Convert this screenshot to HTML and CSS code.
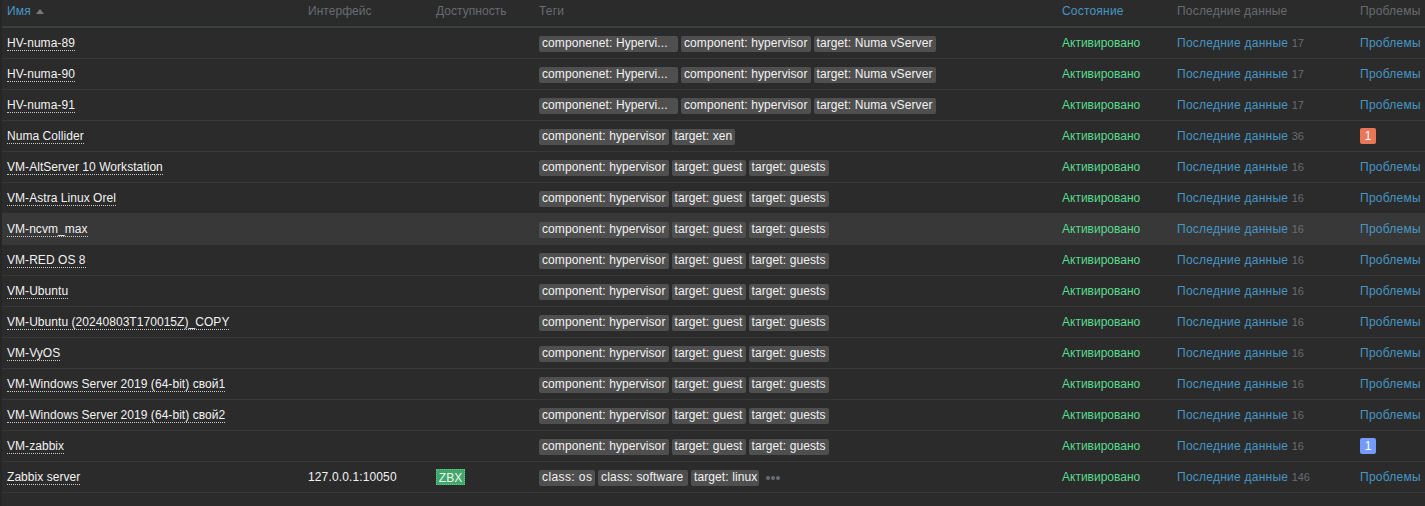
FILE: index.html
```html
<!DOCTYPE html>
<html lang="ru">
<head>
<meta charset="utf-8">
<title>Узлы сети</title>
<link rel="stylesheet" href="styles.css">
</head>
<body>
<main class="page">
<table class="hosts">
<colgroup><col class="c-name"><col class="c-iface"><col class="c-avail"><col class="c-tags"><col class="c-state"><col class="c-data"><col class="c-prob"></colgroup>
<thead><tr>
<th><a class="sort">Имя</a><span class="arrow"></span></th><th class="th-tight">Интерфейс</th><th class="th-tight">Доступность</th><th>Теги</th><th><a class="sort">Состояние</a></th><th>Последние данные</th><th>Проблемы</th>
</tr></thead>
<tbody>
<tr><td><a class="host">HV-numa-89</a></td><td></td><td></td><td><div class="tags"><span class="tag t-long">componenet: Hypervi...</span><span class="tag">component: hypervisor</span><span class="tag">target: Numa vServer</span></div></td><td class="on">Активировано</td><td><a class="link">Последние данные</a> <sup class="n">17</sup></td><td><a class="link">Проблемы</a></td></tr>
<tr><td><a class="host">HV-numa-90</a></td><td></td><td></td><td><div class="tags"><span class="tag t-long">componenet: Hypervi...</span><span class="tag">component: hypervisor</span><span class="tag">target: Numa vServer</span></div></td><td class="on">Активировано</td><td><a class="link">Последние данные</a> <sup class="n">17</sup></td><td><a class="link">Проблемы</a></td></tr>
<tr><td><a class="host">HV-numa-91</a></td><td></td><td></td><td><div class="tags"><span class="tag t-long">componenet: Hypervi...</span><span class="tag">component: hypervisor</span><span class="tag">target: Numa vServer</span></div></td><td class="on">Активировано</td><td><a class="link">Последние данные</a> <sup class="n">17</sup></td><td><a class="link">Проблемы</a></td></tr>
<tr><td><a class="host">Numa Collider</a></td><td></td><td></td><td><div class="tags"><span class="tag">component: hypervisor</span><span class="tag">target: xen</span></div></td><td class="on">Активировано</td><td><a class="link">Последние данные</a> <sup class="n">36</sup></td><td><span class="badge b-red">1</span></td></tr>
<tr><td><a class="host">VM-AltServer 10 Workstation</a></td><td></td><td></td><td><div class="tags"><span class="tag">component: hypervisor</span><span class="tag">target: guest</span><span class="tag">target: guests</span></div></td><td class="on">Активировано</td><td><a class="link">Последние данные</a> <sup class="n">16</sup></td><td><a class="link">Проблемы</a></td></tr>
<tr><td><a class="host">VM-Astra Linux Orel</a></td><td></td><td></td><td><div class="tags"><span class="tag">component: hypervisor</span><span class="tag">target: guest</span><span class="tag">target: guests</span></div></td><td class="on">Активировано</td><td><a class="link">Последние данные</a> <sup class="n">16</sup></td><td><a class="link">Проблемы</a></td></tr>
<tr class="hover"><td><a class="host">VM-ncvm_max</a></td><td></td><td></td><td><div class="tags"><span class="tag">component: hypervisor</span><span class="tag">target: guest</span><span class="tag">target: guests</span></div></td><td class="on">Активировано</td><td><a class="link">Последние данные</a> <sup class="n">16</sup></td><td><a class="link">Проблемы</a></td></tr>
<tr><td><a class="host">VM-RED OS 8</a></td><td></td><td></td><td><div class="tags"><span class="tag">component: hypervisor</span><span class="tag">target: guest</span><span class="tag">target: guests</span></div></td><td class="on">Активировано</td><td><a class="link">Последние данные</a> <sup class="n">16</sup></td><td><a class="link">Проблемы</a></td></tr>
<tr><td><a class="host">VM-Ubuntu</a></td><td></td><td></td><td><div class="tags"><span class="tag">component: hypervisor</span><span class="tag">target: guest</span><span class="tag">target: guests</span></div></td><td class="on">Активировано</td><td><a class="link">Последние данные</a> <sup class="n">16</sup></td><td><a class="link">Проблемы</a></td></tr>
<tr><td><a class="host">VM-Ubuntu (20240803T170015Z)_COPY</a></td><td></td><td></td><td><div class="tags"><span class="tag">component: hypervisor</span><span class="tag">target: guest</span><span class="tag">target: guests</span></div></td><td class="on">Активировано</td><td><a class="link">Последние данные</a> <sup class="n">16</sup></td><td><a class="link">Проблемы</a></td></tr>
<tr><td><a class="host">VM-VyOS</a></td><td></td><td></td><td><div class="tags"><span class="tag">component: hypervisor</span><span class="tag">target: guest</span><span class="tag">target: guests</span></div></td><td class="on">Активировано</td><td><a class="link">Последние данные</a> <sup class="n">16</sup></td><td><a class="link">Проблемы</a></td></tr>
<tr><td><a class="host">VM-Windows Server 2019 (64-bit) свой1</a></td><td></td><td></td><td><div class="tags"><span class="tag">component: hypervisor</span><span class="tag">target: guest</span><span class="tag">target: guests</span></div></td><td class="on">Активировано</td><td><a class="link">Последние данные</a> <sup class="n">16</sup></td><td><a class="link">Проблемы</a></td></tr>
<tr><td><a class="host">VM-Windows Server 2019 (64-bit) свой2</a></td><td></td><td></td><td><div class="tags"><span class="tag">component: hypervisor</span><span class="tag">target: guest</span><span class="tag">target: guests</span></div></td><td class="on">Активировано</td><td><a class="link">Последние данные</a> <sup class="n">16</sup></td><td><a class="link">Проблемы</a></td></tr>
<tr><td><a class="host">VM-zabbix</a></td><td></td><td></td><td><div class="tags"><span class="tag">component: hypervisor</span><span class="tag">target: guest</span><span class="tag">target: guests</span></div></td><td class="on">Активировано</td><td><a class="link">Последние данные</a> <sup class="n">16</sup></td><td><span class="badge b-blue">1</span></td></tr>
<tr><td><a class="host">Zabbix server</a></td><td class="iface">127.0.0.1:10050</td><td><span class="zbx">ZBX</span></td><td><div class="tags"><span class="tag t-os">class: os</span><span class="tag t-soft">class: software</span><span class="tag t-linux">target: linux</span><span class="more"><i></i><i></i><i></i></span></div></td><td class="on">Активировано</td><td><a class="link">Последние данные</a> <sup class="n">146</sup></td><td><a class="link">Проблемы</a></td></tr>
</tbody>
</table>
</main>
</body>
</html>
```
FILE: styles.css
```css
html, body {
  margin: 0;
  height: 100%;
  background: #262626;
  overflow: hidden;
}
body {
  padding-left: 2px;
  font-family: "Liberation Sans", Arial, sans-serif;
  font-size: 12px;
  color: #f2f2f2;
}
.page {
  height: 100%;
  background: #2b2b2b;
}
.hosts {
  width: 1423px;
  table-layout: fixed;
  border-collapse: collapse;
}
.c-name { width: 301px; }
.c-iface { width: 128px; }
.c-avail { width: 103px; }
.c-tags { width: 523px; }
.c-state { width: 115px; }
.c-data { width: 183px; }
.c-prob { width: 70px; }
th {
  height: 27px;
  padding: 0 5px 5px;
  box-sizing: border-box;
  font-weight: normal;
  text-align: left;
  color: #686c71;
  border-bottom: 2px solid #383f3f;
  white-space: nowrap;
  letter-spacing: 0.2px;
}
th.th-tight { letter-spacing: 0.04px; }
td {
  height: 31px;
  padding: 0 5px;
  box-sizing: border-box;
  border-bottom: 1px solid #383838;
  white-space: nowrap;
  vertical-align: middle;
}
.hover td { background: #383838; }
.sort { color: #4796c4; }
.arrow {
  display: inline-block;
  margin-left: 5px;
  border-left: 4px solid transparent;
  border-right: 4px solid transparent;
  border-bottom: 5px solid #787878;
  vertical-align: 1px;
}
.host {
  color: #f2f2f2;
  border-bottom: 1px dotted #c8c8c8;
  letter-spacing: 0.05px;
}
.iface { letter-spacing: 0.13px; }
.tags { display: flex; gap: 3px; align-items: center; padding-top: 2px; }
.tag {
  height: 16px;
  line-height: 15px;
  padding: 0 3px;
  box-sizing: border-box;
  background: #4f4f4f;
  border-radius: 2px;
  color: #f2f2f2;
  letter-spacing: 0.1px;
}
.t-long { width: 139px; }
.t-os { width: 56px; letter-spacing: 0.4px; }
.t-soft { width: 90px; letter-spacing: 0.2px; }
.t-linux { width: 68px; }
.more { display: flex; gap: 1px; margin-left: 4px; }
.more i { width: 4px; height: 4px; border-radius: 50%; background: #686c71; }
.on { color: #59db8f; }
.link { color: #4796c4; letter-spacing: 0.25px; }
.n { font-size: 11px; color: #686c71; vertical-align: baseline; }
.badge {
  display: inline-block;
  width: 16px;
  height: 16px;
  line-height: 16px;
  text-align: center;
  border-radius: 2px;
  color: #ffffff;
}
.b-red { background: #e97659; }
.b-blue { background: #7499ff; }
.zbx {
  display: inline-block;
  width: 29px;
  height: 16px;
  box-sizing: border-box;
  border: 1px dotted #62c98a;
  line-height: 16px;
  text-align: center;
  background: #3fa868;
  color: #f2f2f2;
}
```
